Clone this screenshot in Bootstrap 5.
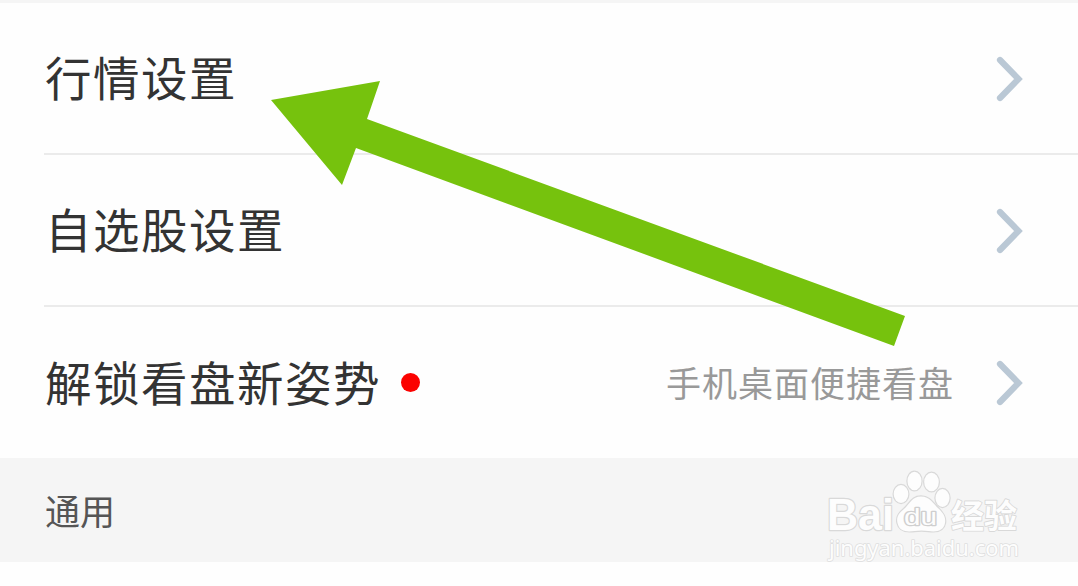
<!DOCTYPE html>
<html lang="zh-CN">
<head>
    <meta charset="UTF-8">
    <meta name="viewport" content="width=device-width, initial-scale=1">
    <title>设置</title>
    <link href="https://cdn.jsdelivr.net/npm/bootstrap@5.3.0/dist/css/bootstrap.min.css" rel="stylesheet">
    <style>
        body {
            height: 586px;
            overflow: hidden;
            background: #fefefe;
            font-family: "Noto Sans CJK SC", sans-serif;
        }
        .top-strip { height: 3px; background: #f5f5f5; }
        .settings .list-group-item {
            height: 152px;
            margin-left: 44px;
            padding: 0 54px 0 0;
            background: transparent;
            border: 0;
            border-bottom: 2px solid #ebebeb;
            color: #333;
        }
        .settings .list-group-item:last-child { border-bottom: 0; height: 151px; }
        .item-title { font-size: 46.5px; letter-spacing: 1.5px; line-height: 1; margin-left: 1px; padding-bottom: 3px; }
        .item-hint { font-size: 35px; letter-spacing: 1px; line-height: 1; color: #999; margin-right: 42px; padding-bottom: 3px; }
        .red-dot { width: 19px; height: 19px; background: #fb0200; margin-left: 20px; }
        .chevron { width: 28px; height: 46px; margin-top: 1px; fill: none; stroke: #bac8d5; stroke-width: 6.2; }
        .section-head { height: 104px; background: #f5f5f5; padding-left: 45px; }
        .section-title { font-size: 35px; line-height: 1; color: #555; padding-bottom: 2px; }
        .arrow-mark { width: 1078px; height: 586px; pointer-events: none; }
        .watermark { right: 50px; bottom: 20px; width: 210px; height: 100px; overflow: visible; }
    </style>
</head>
<body class="position-relative">
    <div class="top-strip"></div>
    <div class="list-group list-group-flush settings">
        <div class="list-group-item d-flex align-items-center">
            <span class="item-title">行情设置</span>
            <svg class="chevron ms-auto" viewBox="0 0 28 46"><path d="M4 4l18.500 19L4 42" stroke-linecap="round"/></svg>
        </div>
        <div class="list-group-item d-flex align-items-center">
            <span class="item-title">自选股设置</span>
            <svg class="chevron ms-auto" viewBox="0 0 28 46"><path d="M4 4l18.500 19L4 42" stroke-linecap="round"/></svg>
        </div>
        <div class="list-group-item d-flex align-items-center">
            <span class="item-title">解锁看盘新姿势</span>
            <span class="red-dot rounded-circle"></span>
            <span class="item-hint ms-auto">手机桌面便捷看盘</span>
            <svg class="chevron" viewBox="0 0 28 46"><path d="M4 4l18.500 19L4 42" stroke-linecap="round"/></svg>
        </div>
    </div>
    <div class="section-head d-flex align-items-center">
        <span class="section-title">通用</span>
    </div>

    <!-- green pointer -->
    <svg class="arrow-mark position-absolute top-0 start-0" viewBox="0 0 1078 586">
        <path fill="#76c20d" d="M271 100L380 81L367 119L905 316L894 346L356 148L342 185Z"/>
    </svg>

    <!-- watermark -->
    <svg class="watermark position-absolute" viewBox="818 466 210 100">
        <g fill="#fdfdfd" stroke="#d9d9d9" stroke-width="2.4" paint-order="stroke" stroke-linejoin="round">
            <text x="827" y="530" font-family="Liberation Sans, sans-serif" font-weight="bold" font-size="43.5" textLength="67" lengthAdjust="spacingAndGlyphs">Bai</text>
            <ellipse cx="901" cy="494" rx="7.3" ry="9"/>
            <ellipse cx="914.5" cy="481" rx="7" ry="9.3"/>
            <ellipse cx="931.5" cy="482" rx="7.3" ry="9.3"/>
            <ellipse cx="942.5" cy="498" rx="7" ry="9"/>
            <path d="M921 496.500c-9 0-11 7-17 12.500c-5 4-8 8-6.500 14c2 9 10 9 17 8c5-.8 9-.8 14 0c8 1.200 15 0 16.500-8c1-6-2-10-6-14c-6-5.500-9-12.500-18-12.500z"/>
            <text x="904" y="525" font-family="Liberation Sans, sans-serif" font-size="24" stroke="#cfcfcf" stroke-width="2.6" textLength="33" lengthAdjust="spacingAndGlyphs">du</text>
            <text x="951" y="527.500" font-family="Noto Sans CJK SC, sans-serif" font-weight="bold" font-size="33" stroke-width="1.8" textLength="66" lengthAdjust="spacingAndGlyphs">经验</text>
            <text x="829" y="556" font-family="Noto Sans, sans-serif" font-size="22" stroke="#dedede" stroke-width="1.6" textLength="190" lengthAdjust="spacingAndGlyphs">jingyan.baidu.com</text>
        </g>
    </svg>

    <script src="https://cdn.jsdelivr.net/npm/bootstrap@5.3.0/dist/js/bootstrap.bundle.min.js"></script>
</body>
</html>
